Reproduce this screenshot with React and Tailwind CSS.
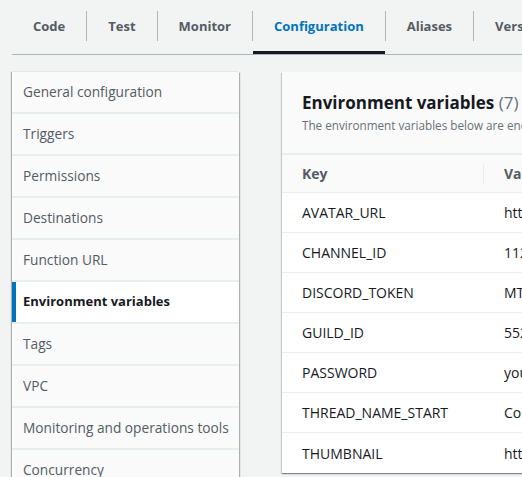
import { Fragment } from "react";

const tabs = ["Code", "Test", "Monitor", "Configuration", "Aliases", "Versions"];

const navItems = [
  "General configuration",
  "Triggers",
  "Permissions",
  "Destinations",
  "Function URL",
  "Environment variables",
  "Tags",
  "VPC",
  "Monitoring and operations tools",
  "Concurrency",
];

const envVars = [
  ["AVATAR_URL", "https://cdn.discordapp.com/avatars"],
  ["CHANNEL_ID", "1123456789012345678"],
  ["DISCORD_TOKEN", "MTAxMjM0NTY3ODkw"],
  ["GUILD_ID", "552345678901234567"],
  ["PASSWORD", "yourpassword"],
  ["THREAD_NAME_START", "Commission"],
  ["THUMBNAIL", "https://cdn.discordapp.com/thumb"],
];

export default function App() {
  return (
    <div
      className="w-[522px] h-[477px] overflow-hidden bg-[#f2f3f3] text-[#16191f]"
      style={{ fontFamily: '"Open Sans", "Noto Sans", Arial, sans-serif' }}
    >
      {/* TABS */}
      <div className="ml-3 flex h-[55px] border-b border-[#aab7b8] whitespace-nowrap">
        {tabs.map((t, i) => (
          <Fragment key={t}>
            {i > 0 && <div className="mt-[11px] h-[30px] w-px shrink-0 bg-[#aab7b8]" />}
            <div
              className={
                "flex h-[54px] shrink-0 items-center px-[21px] text-[13px] font-bold " +
                (t === "Configuration"
                  ? "border-b-[3px] border-[#16191f] pt-[3px] text-[#0073bb]"
                  : "text-[#545b64]")
              }
            >
              {t}
            </div>
          </Fragment>
        ))}
      </div>

      {/* BODY */}
      <div className="mt-[17px] flex gap-[43px] pl-3">
        {/* NAV */}
        <div className="w-[227px] shrink-0 bg-[#eaeded] shadow-[1px_1px_1px_rgba(0,28,36,0.3),-1px_0_1px_rgba(0,28,36,0.3)]">
          {navItems.map((n, i) => (
            <div
              key={n}
              className={
                "flex h-[40px] items-center whitespace-nowrap " +
                (i > 0 ? "mt-[2px] " : "") +
                (n === "Environment variables"
                  ? "border-l-4 border-[#0073bb] bg-white pl-[7px] text-[13px] font-bold text-[#16191f]"
                  : "bg-[#fafafa] pl-[11px] text-[13.7px] text-[#545b64]")
              }
            >
              {n}
            </div>
          ))}
        </div>

        {/* PANEL */}
        <div className="w-[260px] shrink-0 self-start overflow-hidden bg-white shadow-[0_1px_1px_rgba(0,28,36,0.3),1px_1px_1px_rgba(0,28,36,0.15),-1px_1px_1px_rgba(0,28,36,0.15)]">
          <div className="h-[83px] border-b-2 border-[#eaeded] bg-[#fafafa] px-5 pt-[20px] whitespace-nowrap">
            <div className="text-[17px] font-bold leading-[22px] text-[#16191f]">
              Environment variables <span className="font-normal text-[#687078]">(7)</span>
            </div>
            <div className="mt-[3px] text-[11.7px] text-[#687078]">
              The environment variables below are encrypted at rest with the default Lambda service key.
            </div>
          </div>
          <div className="flex h-[38px] items-center border-b border-[#eaeded] bg-[#fafafa] text-[14px] font-bold text-[#545b64]">
            <div className="w-[201px] shrink-0 pl-5">Key</div>
            <div className="h-[20px] w-px shrink-0 bg-[#eaeded]" />
            <div className="pl-5">Value</div>
          </div>
          {envVars.map(([k, v], i) => (
            <div
              key={k}
              className={
                "flex h-[40px] items-center text-[14px] whitespace-nowrap text-[#16191f] " +
                (i < envVars.length - 1 ? "border-b border-[#eaeded]" : "")
              }
            >
              <div className="w-[202px] shrink-0 pl-5">{k}</div>
              <div className="pl-5">{v}</div>
            </div>
          ))}
        </div>
      </div>
    </div>
  );
}
